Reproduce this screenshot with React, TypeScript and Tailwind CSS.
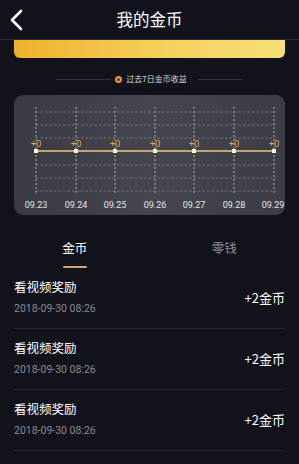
import React from 'react';

const dates = ['09.23', '09.24', '09.25', '09.26', '09.27', '09.28', '09.29'];
const records = [
  { title: '看视频奖励', time: '2018-09-30 08:26', amount: '+2金币' },
  { title: '看视频奖励', time: '2018-09-30 08:26', amount: '+2金币' },
  { title: '看视频奖励', time: '2018-09-30 08:26', amount: '+2金币' },
];

const xs = [22, 62, 101, 141, 180, 220, 260];
const hs = [17, 30, 43, 70, 83, 96];

function Chart() {
  return (
    <div className="mx-[14px] mt-[10px] h-[120px] rounded-[9px] bg-gradient-to-r from-[#3a3a43] via-[#45454e] to-[#3c3c45] overflow-hidden">
      <svg width="272" height="120" viewBox="0 0 272 120">
        {xs.map((x) => (
          <line key={x} x1={x} y1={12} x2={x} y2={98} stroke="#c9c9cf" strokeWidth="0.8" strokeDasharray="2 2" />
        ))}
        {hs.map((y) => (
          <line key={y} x1={22} y1={y} x2={262} y2={y} stroke="#8a8a92" strokeWidth="0.7" strokeDasharray="2.5 2" />
        ))}
        <line x1={22} y1={56} x2={260} y2={56} stroke="#ecc784" strokeWidth="1.3" />
        {xs.map((x) => (
          <g key={'p' + x}>
            <rect x={x - 2} y={54} width={4} height={4} fill="#fff6d8" />
            <text x={x} y={52} textAnchor="middle" fontSize="9.5" fill="#dfa64c" fontFamily="Roboto, sans-serif">+0</text>
          </g>
        ))}
        {dates.map((d, i) => (
          <text key={d} x={i === 6 ? 259 : xs[i]} y={113} textAnchor="middle" fontSize="9" fill="#e6e6ea" fontFamily="Roboto, sans-serif">{d}</text>
        ))}
      </svg>
    </div>
  );
}

export default function App() {
  return (
    <div
      className="w-[299px] h-[464px] overflow-hidden bg-[#12121b] text-white"
      style={{ fontFamily: '"Noto Sans CJK SC", "Noto Sans", sans-serif' }}
    >
      {/* header */}
      <div className="relative h-[40px] flex items-center justify-center border-b border-[#2c2c36]">
        <svg className="absolute left-[9px] top-[9px]" width="16" height="22" viewBox="0 0 16 22">
          <path d="M12 2 L3 11 L12 20" fill="none" stroke="#ffffff" strokeWidth="2.6" strokeLinecap="round" strokeLinejoin="round" />
        </svg>
        <span className="text-[16.5px] leading-none">我的金币</span>
      </div>

      {/* gold bar */}
      <div className="mx-[14px] h-[18px] rounded-b-[6px] bg-gradient-to-r from-[#efb12a] via-[#f4cf58] to-[#f7e07a]" />

      {/* legend */}
      <div className="mt-[15px] flex items-center justify-center h-[12px]">
        <div className="w-[55px] h-px bg-[#33333c]" />
        <div className="ml-[4px] w-[7px] h-[7px] rounded-full border-[2px] border-[#e3954e] bg-[#5a3a20]" />
        <span className="ml-[4px] text-[8px] leading-none text-[#d8d8dc]">过去7日金币收益</span>
        <div className="ml-[11px] w-[45px] h-px bg-[#33333c]" />
      </div>

      <Chart />

      {/* tabs */}
      <div className="mt-[27px] flex">
        <div className="w-1/2 flex flex-col items-center">
          <span className="text-[12.5px] leading-none">金币</span>
          <div className="mt-[11px] w-[24px] h-[2px] bg-[#d9a07a] rounded" />
        </div>
        <div className="w-1/2 flex flex-col items-center">
          <span className="text-[12.5px] leading-none text-[#8d8d95]">零钱</span>
        </div>
      </div>

      {/* list */}
      <div className="mx-[14px]">
        {records.map((r, i) => (
          <div key={i} className="h-[61px] flex items-center justify-between border-b border-[#2a2a33]">
            <div className="flex flex-col">
              <span className="text-[12.5px] leading-none">{r.title}</span>
              <span className="mt-[10px] text-[10.5px] leading-none text-[#8a8a92]" style={{ fontFamily: 'Roboto, "Noto Sans CJK SC", sans-serif' }}>{r.time}</span>
            </div>
            <span className="text-[13px] leading-none">{r.amount}</span>
          </div>
        ))}
      </div>
    </div>
  );
}
